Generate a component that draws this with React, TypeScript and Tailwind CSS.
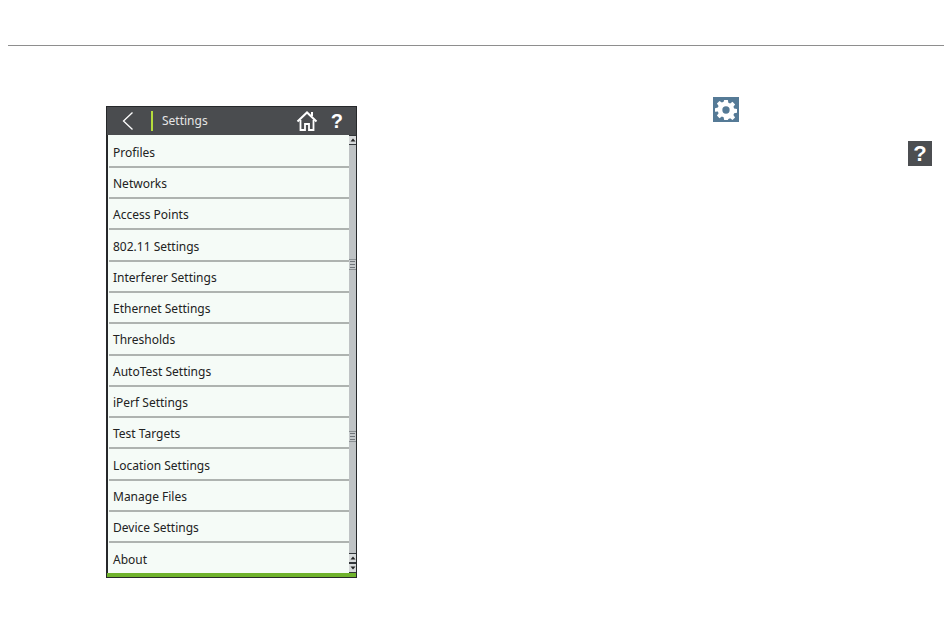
const items = ["Profiles","Networks","Access Points","802.11 Settings","Interferer Settings","Ethernet Settings","Thresholds","AutoTest Settings","iPerf Settings","Test Targets","Location Settings","Manage Files","Device Settings","About"];

function Grip() {
  return (
    <div className="flex h-[11px] w-full flex-col justify-between border-y border-[#8a8f92] bg-[#c4c8ca] px-[1px] py-[1px]">
      {[0,1,2].map((i) => <div key={i} className="h-[1px] bg-[#70757a]" />)}
    </div>
  );
}

function Arrow({ down }: { down?: boolean }) {
  return (
    <div className="flex h-[10px] w-full items-center justify-center border-y border-[#33373a] bg-[#d6d9da]">
      <svg width="6" height="4" viewBox="0 0 6 4">
        <path d={down ? "M0.5 0.5H5.5L3 3.5Z" : "M3 0.5L5.5 3.5H0.5Z"} fill="#222" />
      </svg>
    </div>
  );
}

export default function App() {
  return (
    <div className="h-[638px] w-[950px] overflow-hidden bg-white pt-[45px] font-['Liberation_Sans',sans-serif]">
      <div className="ml-[8px] mr-[6px] h-[1px] bg-[#8e8e8e]" />
      <div className="flex items-start pl-[106px]">
        <div className="mt-[60px] flex h-[472px] w-[251px] flex-col border border-[#26282a] bg-[#f5fbf7]">
          <div className="flex h-[28px] shrink-0 items-center bg-[#4a4c4f] text-white">
            <svg width="14" height="20" viewBox="0 0 14 20" className="ml-[14px]">
              <path d="M11.5 1.5L2.5 10L11.5 18.5" fill="none" stroke="#fff" strokeWidth="1.3" />
            </svg>
            <div className="ml-[16px] h-[20px] w-[2px] bg-[#b4dc3c]" />
            <span className="ml-[9px] font-['Noto_Sans',sans-serif] text-[12px] text-[#e6e6e6]">Settings</span>
            <svg width="22" height="22" viewBox="0 0 22 22" className="ml-auto">
              <path d="M1.5 11.5L11 2.5L20.5 11.5" fill="none" stroke="#fff" strokeWidth="2" />
              <path d="M4.5 10V20H9V14H13V20H17.5V10" fill="none" stroke="#fff" strokeWidth="1.8" />
              <path d="M16 2V6" fill="none" stroke="#fff" strokeWidth="2" />
            </svg>
            <span className="mx-[13px] text-[20px] font-bold leading-none text-white">?</span>
          </div>
          <div className="flex min-h-0 flex-1">
            <div className="flex flex-1 flex-col overflow-hidden border-l border-[#26282a] pl-[1px] pt-[1.5px]">
              {items.map((t, i) => (
                <div key={t} className={"flex h-[31.3px] shrink-0 items-center pl-[4px] pt-[3px] font-['Noto_Sans',sans-serif] text-[12px] text-[#222] border-b-2 " + (i < items.length - 1 ? "border-[#aeb3b0]" : "border-transparent")}>{t}</div>
              ))}
            </div>
            <div className="flex w-[7px] flex-col items-stretch bg-[#bfc3c5]">
              <Arrow />
              <div className="mt-[114px]"><Grip /></div>
              <div className="mt-[161px]"><Grip /></div>
              <div className="mt-auto"><Arrow /></div>
              <Arrow down />
            </div>
          </div>
          <div className="h-[4px] shrink-0 bg-[#6fb22c]" />
        </div>
        <div className="flex flex-1 flex-col">
          <div className="ml-[356px] mt-[51px] flex h-[25px] w-[26px] items-center justify-center bg-[#557a96]">
            <svg width="22" height="22" viewBox="0 0 24 24">
              <path fill="#fff" fillRule="evenodd" d="M10 1h4l.6 3.1 1.9.8 2.6-1.8 2.8 2.8-1.8 2.6.8 1.9 3.1.6v4l-3.1.6-.8 1.9 1.8 2.6-2.8 2.8-2.6-1.8-1.9.8L14 23h-4l-.6-3.1-1.9-.8-2.6 1.8-2.8-2.8 1.8-2.6-.8-1.9L0 14v-4l3.1-.6.8-1.9L2.1 4.9l2.8-2.8 2.6 1.8 1.9-.8L10 1Zm2 7a4 4 0 1 0 0 8 4 4 0 0 0 0-8Z" />
            </svg>
          </div>
          <div className="ml-[551px] mt-[19px] flex h-[25px] w-[24px] items-center justify-center bg-[#4c4e51] text-[22px] font-bold leading-none text-white">?</div>
        </div>
      </div>
    </div>
  );
}
